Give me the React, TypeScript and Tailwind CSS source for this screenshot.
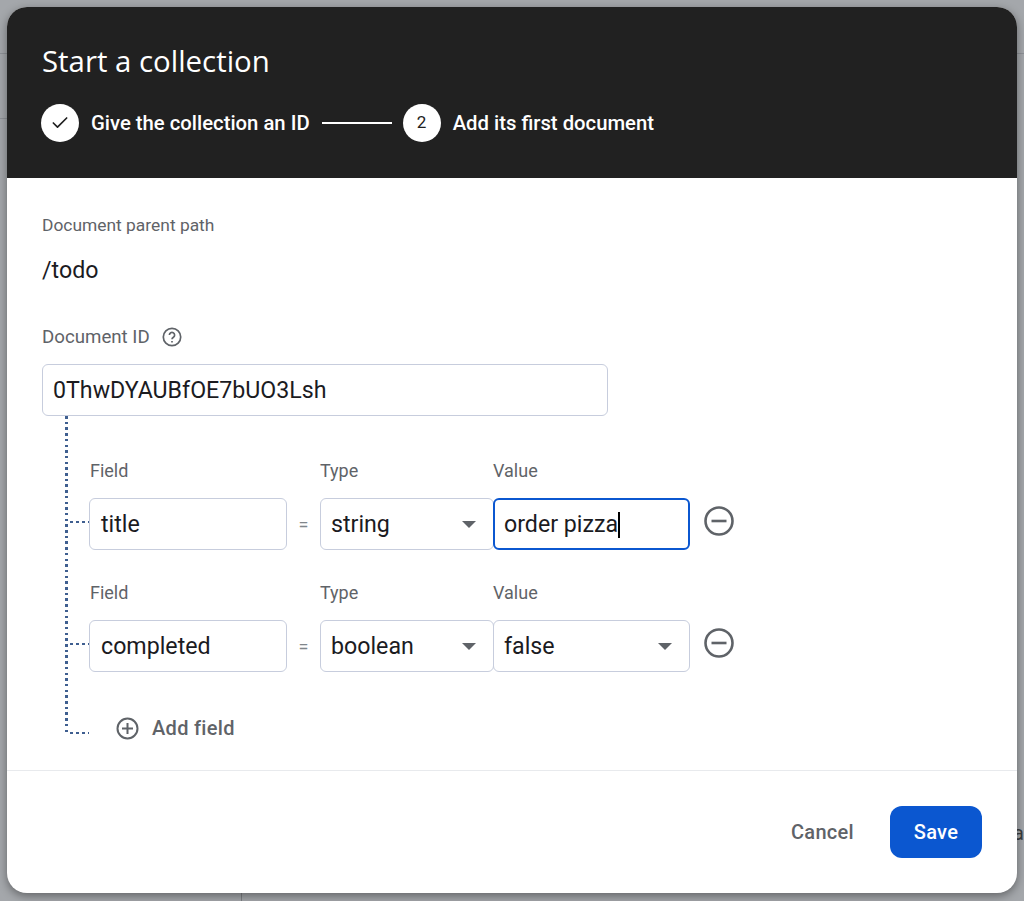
import React from 'react';
import { Check } from 'lucide-react';

const roboto = 'font-["Roboto",sans-serif]';
const inputBox = 'h-[52px] flex items-center rounded-[6px] border border-[#c7cddd] bg-white px-[11px] pt-[1px] text-[23.2px] text-[#1b1b1f]';
const selectBox = 'h-[52px] flex items-center rounded-[6px] border border-[#c7cddd] bg-white pl-[10px] pr-[11px] pt-[1px] text-[23.2px] text-[#1b1b1f]';
const fieldLabel = 'text-[18px] leading-[24px] text-[#5f6368]';
const dots = 'bg-[repeating-linear-gradient(to_bottom,#3f5f90_0,#3f5f90_2.5px,transparent_2.5px,transparent_5.7px)]';
const dashes = 'bg-[repeating-linear-gradient(to_right,transparent_0,transparent_2px,#3f5f90_2px,#3f5f90_5px,transparent_5px,transparent_6px)]';

function Caret() {
  return <span className="ml-auto mr-[6px] h-0 w-0 border-x-[7px] border-t-[7px] border-x-transparent border-t-[#5f6368]" />;
}

function MinusButton() {
  return (
    <svg width="32" height="32" viewBox="0 0 32 32" fill="none" stroke="#5f6368" strokeWidth="2.6" className="ml-[13px] -mt-[6px]">
      <circle cx="16" cy="16" r="13.5" />
      <path d="M8.5 16h15" />
    </svg>
  );
}

function FieldRow({ field, type, value, select, focused }: { field: string; type: string; value: string; select?: boolean; focused?: boolean }) {
  return (
    <div>
      <div className="flex h-[24px]">
        <div className={`${fieldLabel} ml-[22px] w-[230px]`}>Field</div>
        <div className={`${fieldLabel} w-[173px]`}>Type</div>
        <div className={fieldLabel}>Value</div>
      </div>
      <div className="mt-[15px] flex items-center">
        <div className={`mb-[4px] h-[2px] w-[21px] ${dashes}`} />
        <div className={`${inputBox} w-[198px]`}>{field}</div>
        <div className="w-[33px] text-center text-[18px] text-[#80868b]">=</div>
        <div className={`${selectBox} w-[174px]`}>
          {type}
          <Caret />
        </div>
        {focused ? (
          <div className="-ml-px flex h-[52px] w-[197px] items-center rounded-[6px] border-2 border-[#0b57d0] bg-white px-[9px] pt-[1px] text-[23.2px] text-[#1b1b1f]">
            {value}
            <span className="h-[26px] w-[2px] bg-black" />
          </div>
        ) : (
          <div className={`${selectBox} -ml-px w-[197px]`}>
            {value}
            {select && <Caret />}
          </div>
        )}
        <MinusButton />
      </div>
    </div>
  );
}

export default function App() {
  return (
    <div className={`relative flex h-[901px] w-[1024px] items-start justify-center overflow-hidden bg-[#a4a7ab] pt-[7px] ${roboto}`}>
      {/* page behind the dialog */}
      <div className="absolute left-0 top-[53px] h-px w-full bg-[#8e9196]" />
      <div className="absolute left-0 top-[118px] h-px w-[7px] bg-[#8e9196]" />
      <div className="absolute bottom-0 left-[241px] h-[20px] w-px bg-[#7d8084]" />
      <span className="absolute left-[1013px] top-[818px] text-[20px] text-[#3a3d40]">a</span>

      <div className="relative flex h-[886px] w-[1010px] flex-col overflow-hidden rounded-[20px] bg-white shadow-[0_3px_10px_rgba(0,0,0,.4)]">
        {/* Header */}
        <div className="h-[171px] shrink-0 bg-[#212121] px-[34px] pt-[33px] text-white">
          <h1 className='ml-px mt-px font-["Open_Sans",sans-serif] text-[29.4px] font-medium leading-[40px]'>Start a collection</h1>
          <div className="mt-[23px] flex items-center text-[20.3px] font-medium">
            <div className="flex h-[38px] w-[38px] items-center justify-center rounded-full bg-white text-[#212121]">
              <Check size={20} strokeWidth={2} />
            </div>
            <span className="ml-[12px]">Give the collection an ID</span>
            <div className="ml-[12px] h-[2px] w-[70px] bg-white" />
            <div className="ml-[11px] flex h-[38px] w-[38px] items-center justify-center rounded-full bg-white text-[17px] font-normal text-[#212121]">2</div>
            <span className="ml-[12px]">Add its first document</span>
          </div>
        </div>

        {/* Body */}
        <div className="flex-1 px-[35px] pt-[35px]">
          <div className="text-[17.4px] leading-[24px] text-[#5f6368]">Document parent path</div>
          <div className="mt-[18px] text-[23.2px] leading-[30px] text-[#1b1b1f]">/todo</div>
          <div className="mt-[40px] flex items-center gap-[12px]">
            <span className="text-[18.7px] leading-[24px] text-[#5f6368]">Document ID</span>
            <svg width="20" height="20" viewBox="0 0 20 20" fill="none" stroke="#5f6368" strokeWidth="1.7">
              <circle cx="10" cy="10" r="8.7" />
              <path d="M7.4 8a2.6 2.6 0 1 1 4 2.2c-.9.6-1.4 1-1.4 2.1" />
              <path d="M10 14v1.6" />
            </svg>
          </div>
          <div className={`${selectBox} mt-[15px] w-[566px]`}>0ThwDYAUBfOE7bUO3Lsh</div>

          {/* Tree of fields */}
          <div className="ml-[23px] flex h-[318px]">
            <div className={`w-[3px] ${dots}`} />
            <div className="flex flex-col">
              <div className="mt-[43px] flex flex-col gap-[31px]">
                <FieldRow field="title" type="string" value="order pizza" focused />
                <FieldRow field="completed" type="boolean" value="false" select />
              </div>
              <div className="relative mt-[41px] flex h-[30px] items-center pl-[48px]">
                <div className={`absolute left-0 top-[19px] h-[2px] w-[21px] ${dashes}`} />
                <svg width="23" height="23" viewBox="0 0 23 23" fill="none" stroke="#5f6368" strokeWidth="2">
                  <circle cx="11.5" cy="11.5" r="10" />
                  <path d="M11.5 6v11M6 11.5h11" />
                </svg>
                <span className="ml-[13px] text-[20px] font-medium tracking-[.3px] text-[#5f6368]">Add field</span>
              </div>
            </div>
          </div>
        </div>

        {/* Footer */}
        <div className="flex h-[123px] shrink-0 items-center justify-end gap-[36px] border-t border-[#e8eaed] pr-[35px]">
          <span className="text-[20px] font-medium tracking-[.3px] text-[#5f6368]">Cancel</span>
          <button className="h-[52px] w-[92px] rounded-[12px] bg-[#0b57d0] text-[20px] font-medium tracking-[.3px] text-white">Save</button>
        </div>
      </div>
    </div>
  );
}
